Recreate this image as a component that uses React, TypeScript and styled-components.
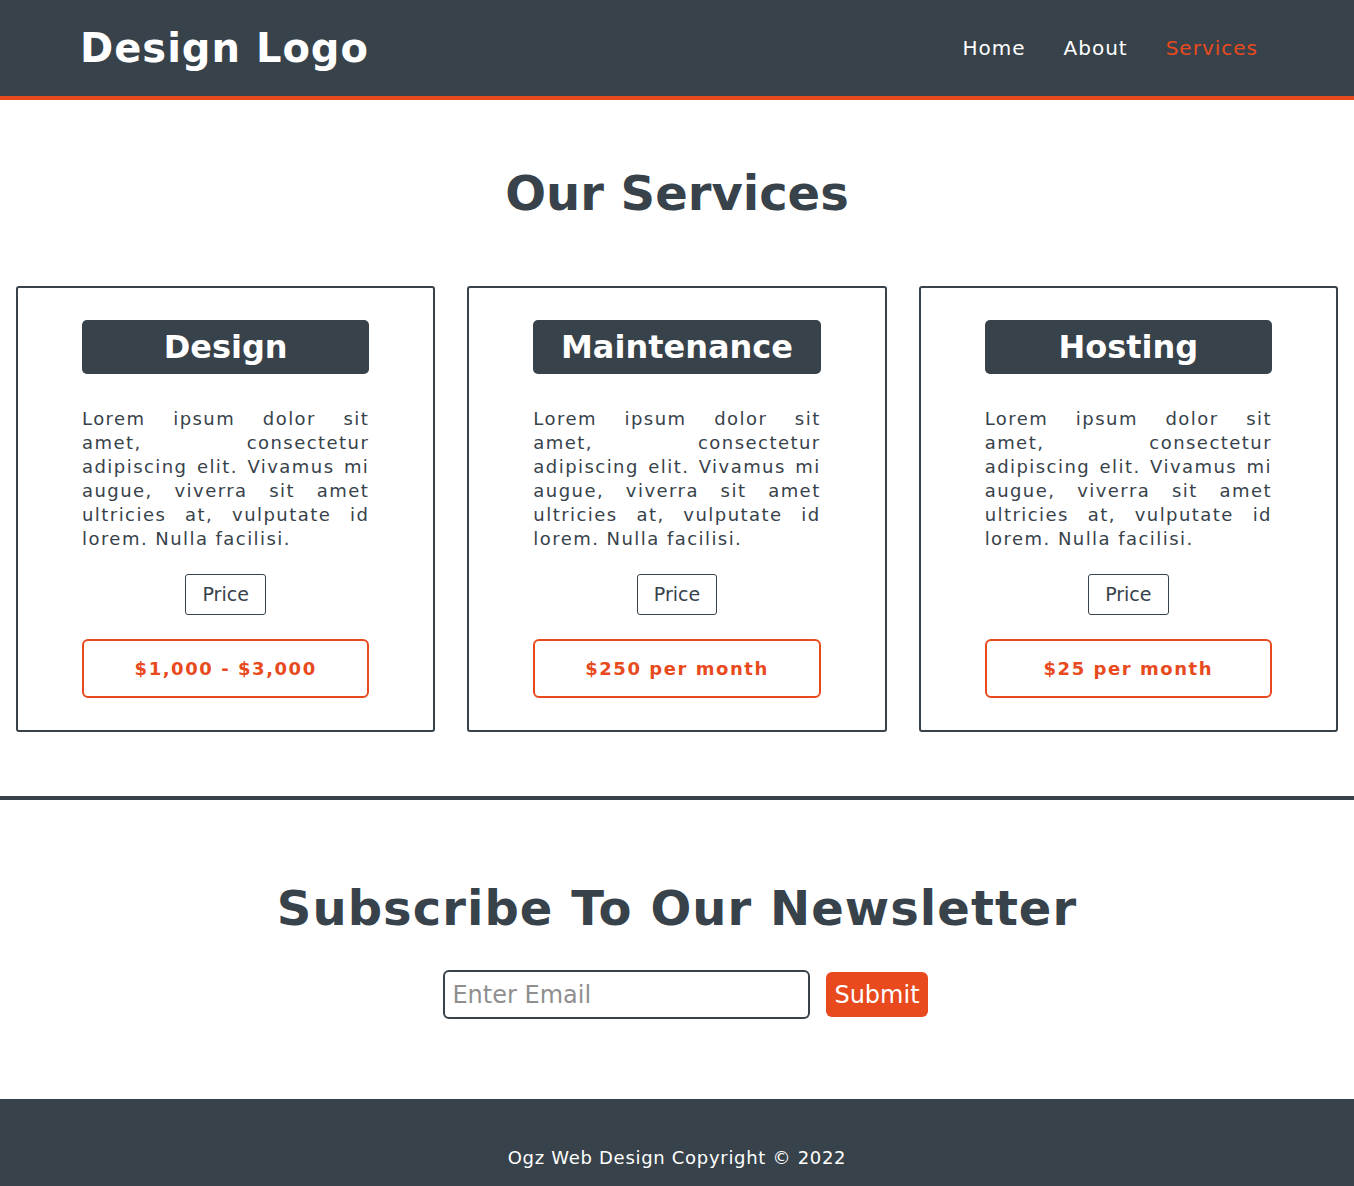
import React from "react";
import styled, { createGlobalStyle } from "styled-components";

const DARK = "#37424a";
const ORANGE = "#e84a1e";

const GlobalStyle = createGlobalStyle`
  * { box-sizing: border-box; }
  html, body { margin: 0; padding: 0; }
  body {
    font-family: "DejaVu Sans", Verdana, sans-serif;
    color: ${DARK};
    background: #ffffff;
  }
`;

const Header = styled.header`
  background: ${DARK};
  border-bottom: 4px solid ${ORANGE};
  height: 100px;
`;

const HeaderInner = styled.div`
  height: 96px;
  padding: 0 77px;
  display: flex;
  align-items: center;
  justify-content: space-between;
`;

const Logo = styled.h1`
  margin: 0 0 0 3px;
  color: #ffffff;
  font-size: 40px;
  font-weight: 700;
  letter-spacing: 1px;
`;

const Nav = styled.nav`
  display: flex;
  align-items: center;
`;

const NavLink = styled.a<{ $active?: boolean }>`
  padding: 0 19px;
  font-size: 20px;
  letter-spacing: 1px;
  text-decoration: none;
  color: ${(p) => (p.$active ? ORANGE : "#ffffff")};
  cursor: pointer;
`;

const ServicesSection = styled.section`
  padding: 65px 16px 64px;
  border-bottom: 4px solid ${DARK};
`;

const SectionTitle = styled.h2<{ $spacing?: string }>`
  margin: 0;
  text-align: center;
  font-size: 48px;
  line-height: 56px;
  font-weight: 700;
  letter-spacing: ${(p) => p.$spacing || "0"};
  color: ${DARK};
`;

const CardGrid = styled.div`
  margin-top: 65px;
  display: grid;
  grid-template-columns: repeat(3, 1fr);
  gap: 32px;
`;

const Card = styled.article`
  border: 2px solid ${DARK};
  border-radius: 3px;
  padding: 32px 64px;
  display: flex;
  flex-direction: column;
  align-items: center;
`;

const CardTitle = styled.h3`
  margin: 0;
  width: 100%;
  background: ${DARK};
  color: #ffffff;
  border-radius: 5px;
  text-align: center;
  font-size: 32px;
  line-height: 38px;
  padding: 8px 0;
  font-weight: 700;
`;

const CardText = styled.p`
  margin: 33px 0 0;
  width: 100%;
  font-size: 18px;
  line-height: 24px;
  letter-spacing: 1.45px;
  text-align: justify;
  color: ${DARK};
`;

const PriceButton = styled.button`
  margin-top: 23px;
  background: #ffffff;
  border: 1px solid ${DARK};
  border-radius: 3px;
  padding: 9px 16px;
  font-family: "DejaVu Sans", Verdana, sans-serif;
  font-size: 19px;
  line-height: 21px;
  color: ${DARK};
  cursor: pointer;
`;

const PriceBox = styled.div`
  margin-top: 24px;
  width: 100%;
  border: 2px solid ${ORANGE};
  border-radius: 6px;
  padding: 16px 0;
  text-align: center;
  font-size: 18px;
  line-height: 23px;
  font-weight: 700;
  letter-spacing: 1.55px;
  color: ${ORANGE};
`;

const NewsletterSection = styled.section`
  padding: 80px 16px 80px;
  display: flex;
  flex-direction: column;
  align-items: center;
`;

const Form = styled.form`
  margin-top: 34px;
  padding-left: 17px;
  display: flex;
  align-items: center;
  gap: 16px;
`;

const EmailInput = styled.input`
  width: 367px;
  height: 49px;
  border: 2px solid ${DARK};
  border-radius: 6px;
  padding: 0 7px;
  font-family: "DejaVu Sans", Verdana, sans-serif;
  font-size: 24px;
  color: ${DARK};
  outline: none;
  &::placeholder { color: #8f8f8f; }
`;

const SubmitButton = styled.button`
  height: 45px;
  background: ${ORANGE};
  color: #ffffff;
  border: none;
  border-radius: 6px;
  padding: 0 8px;
  font-family: "DejaVu Sans", Verdana, sans-serif;
  font-size: 24px;
  cursor: pointer;
`;

const Footer = styled.footer`
  background: ${DARK};
  color: #ffffff;
  text-align: center;
  padding: 48px 16px 48px;
  font-size: 18px;
  line-height: 22px;
  letter-spacing: 0.7px;
`;

const services = [
  { title: "Design", price: "$1,000 - $3,000" },
  { title: "Maintenance", price: "$250 per month" },
  { title: "Hosting", price: "$25 per month" },
];

const lorem =
  "Lorem ipsum dolor sit amet, consectetur adipiscing elit. Vivamus mi augue, viverra sit amet ultricies at, vulputate id lorem. Nulla facilisi.";

export default function App() {
  return (
    <>
      <GlobalStyle />
      <Header>
        <HeaderInner>
          <Logo>Design Logo</Logo>
          <Nav>
            <NavLink>Home</NavLink>
            <NavLink>About</NavLink>
            <NavLink $active>Services</NavLink>
          </Nav>
        </HeaderInner>
      </Header>
      <ServicesSection>
        <SectionTitle>Our Services</SectionTitle>
        <CardGrid>
          {services.map((s) => (
            <Card key={s.title}>
              <CardTitle>{s.title}</CardTitle>
              <CardText>{lorem}</CardText>
              <PriceButton type="button">Price</PriceButton>
              <PriceBox>{s.price}</PriceBox>
            </Card>
          ))}
        </CardGrid>
      </ServicesSection>
      <NewsletterSection>
        <SectionTitle $spacing="1.05px">Subscribe To Our Newsletter</SectionTitle>
        <Form onSubmit={(e) => e.preventDefault()}>
          <EmailInput type="email" placeholder="Enter Email" />
          <SubmitButton type="submit">Submit</SubmitButton>
        </Form>
      </NewsletterSection>
      <Footer>Ogz Web Design Copyright © 2022</Footer>
    </>
  );
}
